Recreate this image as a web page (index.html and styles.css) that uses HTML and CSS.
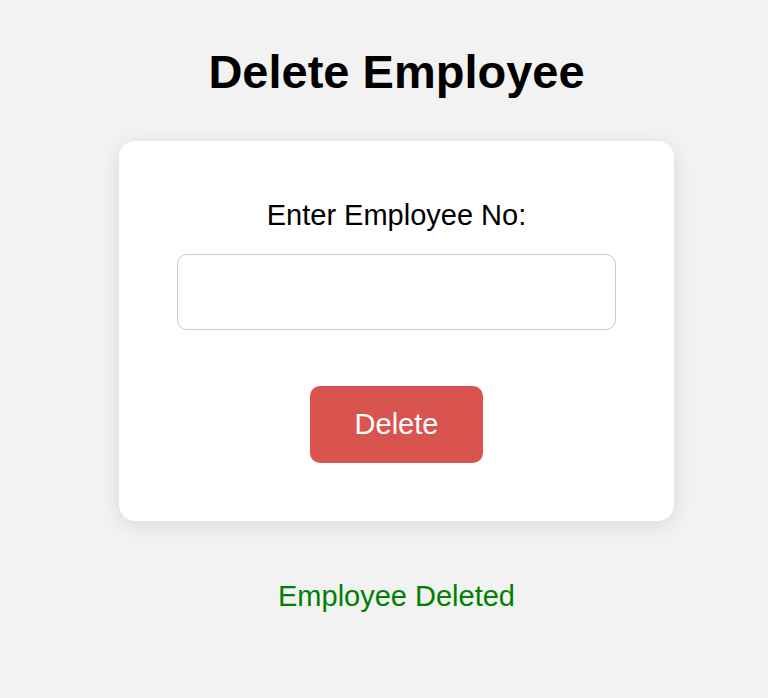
FILE: index.html
```html
<!DOCTYPE html>
<html lang="en">
<head>
<meta charset="utf-8">
<title>Delete Employee</title>
<link rel="stylesheet" href="styles.css">
</head>
<body>
<div class="page">
  <h1 class="title">Delete Employee</h1>
  <form class="card">
    <label class="label" for="empno">Enter Employee No:</label>
    <input class="field" id="empno" type="text">
    <button class="btn" type="button">Delete</button>
  </form>
  <p class="message">Employee Deleted</p>
</div>
</body>
</html>
```

FILE: styles.css
```css
html, body {
  margin: 0;
  padding: 0;
  background: #f2f2f2;
}
body {
  font-family: "Liberation Sans", Arial, sans-serif;
  color: #000;
}
.page {
  padding: 45px 0 0 25px;
  display: flex;
  flex-direction: column;
  align-items: center;
  text-align: center;
}
.title {
  margin: 0;
  font-size: 47px;
  line-height: 54px;
  font-weight: bold;
}
.card {
  margin-top: 42px;
  width: 555px;
  box-sizing: border-box;
  background: #fff;
  border-radius: 16px;
  box-shadow: 0 4px 20px rgba(0, 0, 0, 0.1);
  padding: 58px 58px 58px;
  display: flex;
  flex-direction: column;
  align-items: center;
}
.label {
  display: block;
  font-size: 29px;
  line-height: 33px;
}
.field {
  margin-top: 22px;
  width: 100%;
  height: 76px;
  box-sizing: border-box;
  border: 1px solid #ccc;
  border-radius: 10px;
  background: #fff;
  font-size: 26px;
  padding: 0 14px;
}
.btn {
  margin-top: 56px;
  width: 173px;
  height: 77px;
  border: none;
  border-radius: 10px;
  background: #d9534f;
  color: #fff;
  font-family: "Liberation Sans", Arial, sans-serif;
  font-size: 29px;
  padding: 0;
}
.message {
  margin: 59px 0 0;
  font-size: 29px;
  line-height: 33px;
  color: #008000;
}
```
